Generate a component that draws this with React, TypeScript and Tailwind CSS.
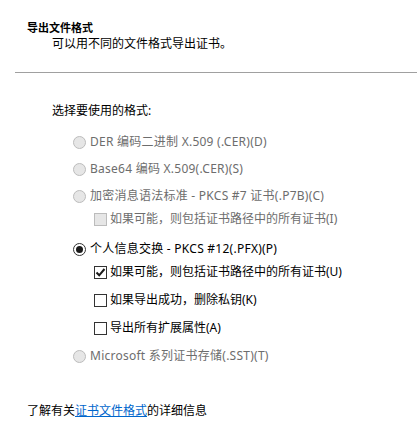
const font = { fontFamily: '"Noto Sans", "Noto Sans CJK SC", sans-serif' };

function Radio({ checked, disabled }: { checked?: boolean; disabled?: boolean }) {
  return (
    <span
      className={
        "flex h-[13px] w-[13px] shrink-0 items-center justify-center rounded-full border " +
        (disabled ? "border-[#bcbcbc] bg-[#e6e6e6]" : "border-[#333333] bg-white")
      }
    >
      {checked && <span className="h-[7px] w-[7px] rounded-full bg-[#1a1a1a]" />}
    </span>
  );
}

function Check({ checked, disabled }: { checked?: boolean; disabled?: boolean }) {
  return (
    <span
      className={
        "flex h-[13px] w-[13px] shrink-0 items-center justify-center border " +
        (disabled ? "border-[#bcbcbc] bg-[#e6e6e6]" : "border-[#333333] bg-white")
      }
    >
      {checked && (
        <svg width="11" height="11" viewBox="0 0 11 11">
          <path d="M1.5 5.5 L4.2 8.3 L9.5 2" fill="none" stroke="#1a1a1a" strokeWidth="2" />
        </svg>
      )}
    </span>
  );
}

function RadioRow({ label, checked, disabled, className }: { label: string; checked?: boolean; disabled?: boolean; className: string }) {
  return (
    <div className={"flex h-[16px] items-center gap-[4px] pl-[73px] " + className}>
      <Radio checked={checked} disabled={disabled} />
      <span className={"tracking-[0.25px] " + (disabled ? "text-[#6d6d6d]" : "text-black")}>{label}</span>
    </div>
  );
}

function CheckRow({ label, checked, disabled, className }: { label: string; checked?: boolean; disabled?: boolean; className: string }) {
  return (
    <div className={"flex h-[16px] items-center gap-[3px] pl-[94px] " + className}>
      <Check checked={checked} disabled={disabled} />
      <span className={disabled ? "text-[#6d6d6d]" : "text-black"}>{label}</span>
    </div>
  );
}

export default function App() {
  return (
    <div className="h-[435px] w-[417px] overflow-hidden bg-white text-[12px] leading-[16px] text-black" style={font}>
      {/* header */}
      <div className="pt-[20px]">
        <div className="pl-[27px] text-[11px] font-bold leading-[16px]">导出文件格式</div>
        <div className="pl-[52px] leading-[16px]">可以用不同的文件格式导出证书。</div>
      </div>
      <div className="ml-[15px] mt-[20px] h-px bg-[#a0a0a0]" />

      <div className="mt-[30px] pl-[52px]">选择要使用的格式:</div>

      <RadioRow className="mt-[15px]" disabled label="DER 编码二进制 X.509 (.CER)(D)" />
      <RadioRow className="mt-[11px]" disabled label="Base64 编码 X.509(.CER)(S)" />
      <RadioRow className="mt-[11px]" disabled label="加密消息语法标准 - PKCS #7 证书(.P7B)(C)" />
      <CheckRow className="mt-[7px]" disabled label="如果可能，则包括证书路径中的所有证书(I)" />
      <RadioRow className="mt-[14px]" checked label="个人信息交换 - PKCS #12(.PFX)(P)" />
      <CheckRow className="mt-[7px]" checked label="如果可能，则包括证书路径中的所有证书(U)" />
      <CheckRow className="mt-[12px]" label="如果导出成功，删除私钥(K)" />
      <CheckRow className="mt-[12px]" label="导出所有扩展属性(A)" />
      <RadioRow className="mt-[12px]" disabled label="Microsoft 系列证书存储(.SST)(T)" />

      <div className="mt-[39px] pl-[27px]">
        了解有关
        <a href="#" className="text-[#0066cc] underline">证书文件格式</a>
        的详细信息
      </div>
    </div>
  );
}
